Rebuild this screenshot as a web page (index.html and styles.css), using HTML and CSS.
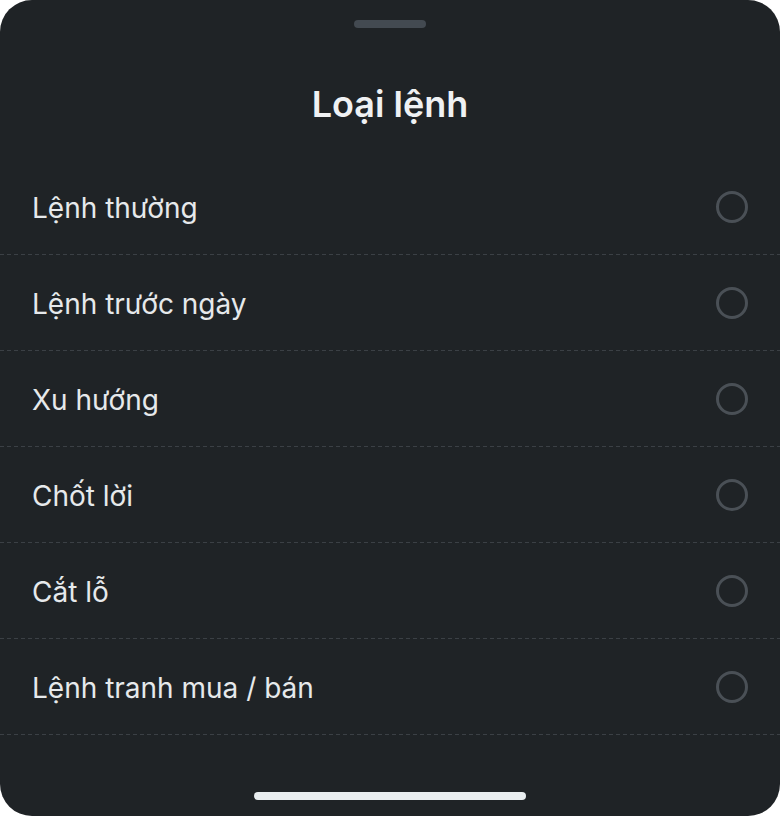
FILE: index.html
```html
<!DOCTYPE html>
<html lang="vi">
<head>
    <meta charset="UTF-8">
    <meta name="viewport" content="width=device-width, initial-scale=1.0">
    <title>Loại lệnh</title>
    <link rel="stylesheet" href="styles.css">
</head>
<body>
    <div class="sheet">
        <div class="handle"></div>
        <h2 class="title">Loại lệnh</h2>

        <!-- Order type options -->
        <ul class="options">
            <li class="option"><span>Lệnh thường</span><i class="radio"></i></li>
            <li class="option"><span>Lệnh trước ngày</span><i class="radio"></i></li>
            <li class="option"><span>Xu hướng</span><i class="radio"></i></li>
            <li class="option"><span>Chốt lời</span><i class="radio"></i></li>
            <li class="option"><span>Cắt lỗ</span><i class="radio"></i></li>
            <li class="option"><span>Lệnh tranh mua / bán</span><i class="radio"></i></li>
        </ul>

        <div class="home-bar"></div>
    </div>
</body>
</html>
```

FILE: styles.css
```css
body {
    margin: 0;
    background-color: #fff;
    font-family: Inter, "Noto Sans", sans-serif;
}
.sheet {
    height: 816px;
    background-color: #1f2326;
    border-radius: 32px;
    display: flex;
    flex-direction: column;
    overflow: hidden;
}
.handle {
    width: 72px;
    height: 8px;
    border-radius: 4px;
    background-color: #434a51;
    margin: 20px auto 0;
}
.title {
    margin: 55px 0 34px;
    font-size: 36px;
    line-height: 42px;
    font-weight: 600;
    text-align: center;
    color: #eff1f3;
}
.options {
    list-style: none;
    margin: 0;
    padding: 0;
}
.option {
    height: 96px;
    padding: 0 32px;
    display: flex;
    align-items: center;
    justify-content: space-between;
    /* dashed divider, 4px dash / 3px gap */
    background: linear-gradient(to right, #3b4045 4px, transparent 4px) left bottom / 7px 1px repeat-x;
    font-size: 28px;
    color: #e6e9eb;
}
.option span {
    padding-top: 1px;
}
.radio {
    width: 26px;
    height: 26px;
    border: 3px solid #4a5056;
    border-radius: 50%;
}
.home-bar {
    width: 272px;
    height: 8px;
    border-radius: 4px;
    background-color: #e9eef0;
    margin: auto auto 16px;
}
```
